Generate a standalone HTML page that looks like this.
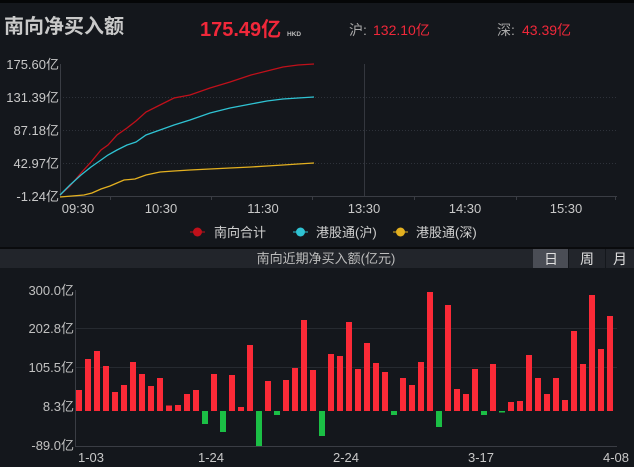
<!DOCTYPE html>
<html><head><meta charset="utf-8"><style>
html,body{margin:0;padding:0;width:634px;height:467px;overflow:hidden;background:#14171c;font-family:"Liberation Sans","Noto Sans CJK SC",sans-serif;}
svg{position:absolute;left:0;top:0}
</style></head><body>
<svg width="634" height="467" xmlns="http://www.w3.org/2000/svg" font-family="Liberation Sans, Noto Sans CJK SC, sans-serif">
<rect x="0" y="0" width="634" height="3" fill="#050607"/>
<text x="4" y="33" font-size="20" font-weight="bold" fill="#c9c9c9">南向净买入额</text>
<text x="200" y="36" font-size="20" font-weight="bold" fill="#f0283a">175.49亿</text>
<text x="287" y="36" font-size="6.5" font-weight="bold" fill="#bbb">HKD</text>
<text x="349" y="35" font-size="14" fill="#aaa">沪:</text>
<text x="373" y="35" font-size="14" fill="#f0283a">132.10亿</text>
<text x="497" y="35" font-size="14" fill="#aaa">深:</text>
<text x="522" y="35" font-size="14" fill="#f0283a">43.39亿</text>
<g font-size="13" fill="#c8c8c8" text-anchor="end">
<text x="59" y="69">175.60亿</text>
<text x="59" y="102">131.39亿</text>
<text x="59" y="135">87.18亿</text>
<text x="59" y="168">42.97亿</text>
<text x="59" y="201">-1.24亿</text>
</g>
<g stroke="#2e323a" stroke-dasharray="1,2" stroke-width="1">
<line x1="60" y1="97.5" x2="617" y2="97.5"/><line x1="60" y1="130.5" x2="617" y2="130.5"/><line x1="60" y1="163.5" x2="617" y2="163.5"/>
</g>
<line x1="364.5" y1="64" x2="364.5" y2="196" stroke="#34373e"/>
<line x1="60.5" y1="64" x2="60.5" y2="197" stroke="#3a3d44"/>
<line x1="60" y1="196.5" x2="617" y2="196.5" stroke="#3a3d44"/>
<g stroke="#3a3d44"><line x1="110.5" y1="196" x2="110.5" y2="200"/><line x1="211.5" y1="196" x2="211.5" y2="200"/><line x1="312.5" y1="196" x2="312.5" y2="200"/><line x1="414.5" y1="196" x2="414.5" y2="200"/><line x1="516.5" y1="196" x2="516.5" y2="200"/><line x1="615.5" y1="196" x2="615.5" y2="200"/></g>
<g font-size="13" fill="#c8c8c8" text-anchor="middle">
<text x="78" y="213">09:30</text><text x="161" y="213">10:30</text><text x="263" y="213">11:30</text><text x="364" y="213">13:30</text><text x="465" y="213">14:30</text><text x="566" y="213">15:30</text>
</g>
<polyline fill="none" stroke="#c0101a" stroke-width="1.3" points="60,195 70,186 81,173 91,162 101,150 108,145 117,135 127,128 136,121 146,112 160,105 174,98 190,95 210,88 230,82 251,75 267,71 283,67 298,65 314,64"/>
<polyline fill="none" stroke="#2fc3d3" stroke-width="1.3" points="60,195 70,185 81,175 91,167 101,160 108,155 117,150 127,145 136,142 146,135 160,130 174,125 190,120 210,113 230,108 251,104 267,101 283,99 298,98 314,97"/>
<polyline fill="none" stroke="#e3b020" stroke-width="1.3" points="60,197 72,196 84,195 92,193 101,189 110,186 117,183 124,180 135,179 146,175 160,172 174,171 190,170 210,169 230,168 251,167 267,166 283,165 298,164 314,163"/>
<g font-size="13" fill="#d0d0d0">
<line x1="190" y1="232" x2="205" y2="232" stroke="#c0101a"/><circle cx="197.5" cy="232" r="4.5" fill="#c0101a"/><text x="214" y="237">南向合计</text>
<line x1="293" y1="232" x2="308" y2="232" stroke="#2fc3d3"/><circle cx="300.5" cy="232" r="4.5" fill="#2fc3d3"/><text x="316" y="237">港股通(沪)</text>
<line x1="393" y1="232" x2="408" y2="232" stroke="#e3b020"/><circle cx="400.5" cy="232" r="4.5" fill="#e3b020"/><text x="416" y="237">港股通(深)</text>
</g>
<rect x="0" y="247" width="634" height="2" fill="#0a0b0d"/>
<rect x="0" y="249" width="634" height="19" fill="#22252b"/>
<text x="326" y="263" font-size="13" fill="#bdbdbd" text-anchor="middle">南向近期净买入额(亿元)</text>
<rect x="533" y="249" width="35" height="19" fill="#4a4d55"/>
<rect x="568" y="249" width="1" height="19" fill="#14171c"/>
<rect x="605" y="249" width="1" height="19" fill="#14171c"/>
<g font-size="14" fill="#e0e0e0" text-anchor="middle"><text x="551" y="264">日</text><text x="587" y="264">周</text><text x="620" y="264">月</text></g>
<g font-size="13" fill="#c0c0c0" text-anchor="end">
<text x="74" y="295">300.0亿</text><text x="74" y="333">202.8亿</text><text x="74" y="372">105.5亿</text><text x="74" y="411">8.3亿</text><text x="74" y="450">-89.0亿</text>
</g>
<g stroke="#262a30"><line x1="75" y1="328.5" x2="617" y2="328.5"/><line x1="75" y1="367.5" x2="617" y2="367.5"/></g>
<line x1="75.5" y1="290" x2="75.5" y2="447" stroke="#3a3d44"/>
<line x1="75" y1="446.5" x2="617" y2="446.5" stroke="#3a3d44"/>
<g fill="#fb2a37">
<rect x="76" y="390" width="6" height="21"/><rect x="85" y="359" width="6" height="52"/><rect x="94" y="351" width="6" height="60"/><rect x="103" y="366" width="6" height="45"/><rect x="112" y="392" width="6" height="19"/><rect x="121" y="385" width="6" height="26"/><rect x="130" y="362" width="6" height="49"/><rect x="139" y="374" width="6" height="37"/><rect x="148" y="386" width="6" height="25"/><rect x="157" y="378" width="6" height="33"/><rect x="166" y="405.5" width="6" height="5.5"/><rect x="175" y="405" width="6" height="6"/><rect x="184" y="394" width="6" height="17"/><rect x="193" y="390" width="6" height="21"/>
<rect x="211" y="374" width="6" height="37"/><rect x="229" y="375" width="6" height="36"/><rect x="238" y="407" width="6" height="4"/><rect x="247" y="345" width="6" height="66"/><rect x="265" y="381" width="6" height="30"/><rect x="283" y="380" width="6" height="31"/><rect x="292" y="368" width="6" height="43"/><rect x="301" y="320" width="6" height="91"/><rect x="310" y="370" width="6" height="41"/>
<rect x="328" y="354" width="6" height="57"/><rect x="337" y="356" width="6" height="55"/><rect x="346" y="322" width="6" height="89"/><rect x="355" y="369" width="6" height="42"/><rect x="364" y="343" width="6" height="68"/><rect x="373" y="363" width="6" height="48"/><rect x="382" y="372" width="6" height="39"/>
<rect x="400" y="378" width="6" height="33"/><rect x="409" y="385" width="6" height="26"/><rect x="418" y="362" width="6" height="49"/><rect x="427" y="292" width="6" height="119"/><rect x="445" y="305" width="6" height="106"/><rect x="454" y="389" width="6" height="22"/><rect x="463" y="394" width="6" height="17"/><rect x="472" y="369" width="6" height="42"/><rect x="490" y="364" width="6" height="47"/>
<rect x="508" y="402" width="6" height="9"/><rect x="517" y="401" width="6" height="10"/><rect x="526" y="355" width="6" height="56"/><rect x="535" y="378" width="6" height="33"/><rect x="544" y="394" width="6" height="17"/><rect x="553" y="378" width="6" height="33"/><rect x="562" y="400" width="6" height="11"/><rect x="571" y="331" width="6" height="80"/><rect x="580" y="364" width="6" height="47"/><rect x="589" y="295" width="6" height="116"/><rect x="598" y="349" width="6" height="62"/><rect x="607" y="316" width="6" height="95"/>
</g>
<g fill="#1bbf45">
<rect x="202" y="411" width="6" height="13"/><rect x="220" y="411" width="6" height="21"/><rect x="256" y="411" width="6" height="35"/><rect x="274" y="411" width="6" height="4"/><rect x="319" y="411" width="6" height="25"/><rect x="391" y="411" width="6" height="4"/><rect x="436" y="411" width="6" height="16"/><rect x="481" y="411" width="6" height="4"/><rect x="499" y="411" width="6" height="1.5"/>
</g>
<g font-size="13" fill="#c8c8c8" text-anchor="middle">
<text x="91" y="462">1-03</text><text x="211" y="462">1-24</text><text x="346" y="462">2-24</text><text x="481" y="462">3-17</text><text x="616" y="462">4-08</text>
</g>
</svg>
</body></html>
